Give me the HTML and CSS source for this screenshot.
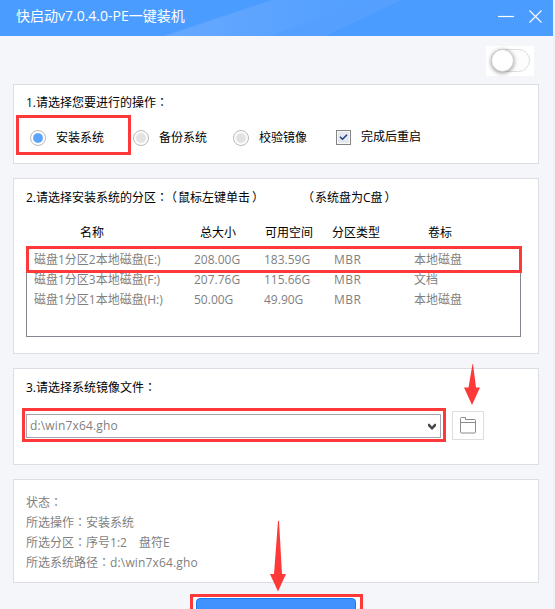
FILE: index.html
```html
<!DOCTYPE html>
<html lang="zh-CN">
<head>
<meta charset="utf-8">
<title>快启动v7.0.4.0-PE一键装机</title>
<link rel="stylesheet" href="styles.css">
</head>
<body>
<div class="window">
  <header class="titlebar">
    <svg class="sheen" width="553" height="36" viewBox="0 0 553 36">
      <defs>
        <linearGradient id="band" x1="0" x2="1"><stop offset="0" stop-color="#66a8ff"/><stop offset="1" stop-color="#4f9eff"/></linearGradient>
      </defs>
      <path d="M164 36L272 0H400L303 36Z" fill="url(#band)"/>
      <path d="M268 36L376 0H402L325 36Z" fill="#559fff"/>
    </svg>
    <h1 class="title">快启动v7.0.4.0-PE一键装机</h1>
    <svg class="controls" width="46" height="16" viewBox="0 0 46 16" fill="none" stroke="#fff">
      <path d="M0 8.5H16" stroke-width="1.2"/><path d="M31.5 2.5L43.5 14.5M43.5 2.5L31.5 14.5" stroke-width="1.1"/>
    </svg>
  </header>
  <div class="toolbar"><div class="toggle"><div class="track"><div class="knob"></div></div></div></div>

  <section class="panel actions">
    <h2 class="heading">1.请选择您要进行的操作<span class="cp" lang="zh-TW">：</span></h2>
    <div class="options">
      <label class="option"><i class="radio on"></i>安装系统</label>
      <label class="option"><i class="radio"></i>备份系统</label>
      <label class="option"><i class="radio"></i>校验镜像</label>
      <label class="option restart"><i class="check"><svg width="9" height="7" viewBox="0 0 9 7"><path d="M1 2.8L3.5 5.3L8 .8" fill="none" stroke="#203c8c" stroke-width="1.5"/></svg></i>完成后重启</label>
    </div>
    <div class="mark mark-action"></div>
  </section>

  <section class="panel partitions">
    <h2 class="heading"><span class="part-title">2.请选择安装系统的分区<span class="cp tight" lang="zh-TW">：</span><span class="open">（</span>鼠标左键单击<span class="close">）</span></span><span><span class="open">（</span>系统盘为C盘<span class="close">）</span></span></h2>
    <div class="row thead"><span>名称</span><span>总大小</span><span>可用空间</span><span>分区类型</span><span>卷标</span></div>
    <div class="list">
      <div class="row"><span>磁盘1分区2本地磁盘(E:)</span><span>208.00G</span><span>183.59G</span><span class="mbr">MBR</span><span>本地磁盘</span></div>
      <div class="row"><span>磁盘1分区3本地磁盘(F:)</span><span>207.76G</span><span>115.66G</span><span class="mbr">MBR</span><span>文档</span></div>
      <div class="row"><span>磁盘1分区1本地磁盘(H:)</span><span>50.00G</span><span>49.90G</span><span class="mbr">MBR</span><span>本地磁盘</span></div>
    </div>
    <div class="mark mark-row"></div>
  </section>

  <section class="panel image">
    <h2 class="heading">3.请选择系统镜像文件<span class="cp" lang="zh-TW">：</span></h2>
    <div class="picker">
      <div class="select"><span class="path">d:\win7x64.gho</span><svg width="8" height="7" viewBox="0 0 8 7"><path d="M0 .8V3L4 7L8 3V.8H6.6L4 3.6L1.4 .8Z" fill="#454545"/></svg></div>
      <div class="browse"><svg width="16" height="17" viewBox="0 0 16 17" fill="none" stroke="#8b8b8b"><path d="M.5 15V1.5Q.5 .5 1.5 .5H5.5V2.5H14.5Q15.5 2.5 15.5 3.5V15Q15.5 16 14.5 16H1.5Q.5 16 .5 15ZM.5 5.5H15.5"/></svg></div>
    </div>
    <div class="mark mark-path"></div>
    <svg class="arrow arrow-browse" width="16" height="41" viewBox="0 0 16 41"><path d="M8.5 0H9L12 23.5H16L8 41L0 23.5H4.5Z" fill="#fd3939"/></svg>
  </section>

  <section class="panel status">
    <p>状态<span class="cp" lang="zh-TW">：</span></p>
    <p>所选操作<span class="cp" lang="zh-TW">：</span>安装系统</p>
    <p>所选分区<span class="cp" lang="zh-TW">：</span>序号1:2<span class="drive">盘符E</span></p>
    <p>所选系统路径<span class="cp" lang="zh-TW">：</span><span class="path">d:\win7x64.gho</span></p>
    <svg class="arrow arrow-start" width="16" height="71" viewBox="0 0 16 71"><path d="M8 0H9L12 53H16L8 70.5L0 53H4Z" fill="#fd3939"/></svg>
  </section>

  <footer class="footer"><div class="start-mark"><div class="start"></div></div></footer>
</div>
</body>
</html>
```
FILE: styles.css
```css
* { box-sizing: border-box; }
html, body { margin: 0; height: 609px; overflow: hidden; background: #edf2fa; }
body { font: 12px/20px "Open Sans", "Noto Sans CJK SC", sans-serif; color: #000; text-spacing-trim: space-all; }
h1, h2, p { margin: 0; font-weight: 400; }
svg { display: block; }
.window { width: 553px; height: 609px; overflow: hidden; background: #f5f6f9; white-space: nowrap; }
.cp { font-family: "Noto Sans CJK TC", sans-serif; line-height: 1; }
.cp.tight { letter-spacing: -3px; }
.open { margin-right: 1px; }
.close { margin-left: 2px; }

.titlebar { position: relative; display: flex; justify-content: space-between; height: 36px; padding: 0 10px 0 16px; background: #4b9cff; }
.sheen { position: absolute; left: 0; top: 0; }
.title { position: relative; color: #fff; font-size: 14px; line-height: 32px; }
.controls { position: relative; margin-top: 8px; margin-right: -1px; }

.toolbar { display: flex; justify-content: flex-end; height: 48px; padding: 10px 19px 0 0; }
.toggle { width: 48px; height: 30px; padding: 3px 4px 0 5px; background: #fff; }
.track { width: 39px; height: 23px; border: 1px solid #ddd; border-radius: 12px; background: #fdfdfd; }
.knob { width: 23px; height: 23px; margin: -1px; border-radius: 50%; border: 1px solid #ccc; background: #fff; box-shadow: 0 1px 4px rgba(0,0,0,.4); }

.panel { position: relative; width: 526px; margin: 0 0 14px 13px; padding: 0 12px; border: 1px solid #dbdfe5; background: #fff; }
.heading { height: 20px; font-size: 12px; line-height: 20px; }
.mark { position: absolute; border: 3px solid #fd3939; }

.actions { height: 80px; padding-top: 8px; }
.options { display: flex; height: 20px; margin-top: 14px; padding-left: 4px; }
.option { display: flex; align-items: center; width: 100px; }
.option:first-child { width: 103px; }
.option:nth-child(3) { width: 102px; }
.option:not(.restart) { padding-top: 1px; height: 21px; }
.radio { width: 16px; height: 16px; margin-right: 10px; border: 1px solid #b9b9b9; border-radius: 50%; background: radial-gradient(circle, #e2e2e2 0 4px, #eee 5px, #fff 6px); }
.radio.on { background: radial-gradient(circle at 50% 50%, #5aa5fa 0 4.3px, #fff 5.5px); }
.option.restart { width: auto; padding-left: 1px; }
.check { display: flex; align-items: center; justify-content: center; width: 15px; height: 15px; margin-right: 10px; border: 1px solid #858585; background: #e5e8ed; box-shadow: inset 0 0 0 1px #f8f8f8; }
.mark-action { left: 2px; top: 30px; width: 115px; height: 40px; }

.partitions { height: 176px; padding-top: 9px; }
.partitions .heading { display: flex; }
.part-title { width: 276px; }
.row { display: grid; grid-template-columns: 160px 70px 70px 80px 1fr; height: 20px; }
.thead { grid-template-columns: 120px 65px 67px 96px 1fr; margin-top: 15px; padding-left: 54px; }
.list { width: 495px; height: 90px; margin-top: 4px; padding: 2px 0 0 7px; border: 1px solid #828790; color: #7f7f7f; }
.mbr { letter-spacing: .5px; }
.mark-row { left: 12px; top: 67px; width: 496px; height: 27px; }

.image { height: 97px; padding-top: 9px; }
.picker { display: flex; align-items: flex-start; margin-top: 13px; }
.select { display: flex; align-items: center; justify-content: space-between; width: 415px; height: 24px; margin: 3px 11px 0 0; padding: 0 4px 0 3px; border: 1px solid #a6a6b0; color: #7f7f7f; }
.path { font-size: 12px; letter-spacing: .15px; }
.browse { display: flex; align-items: center; justify-content: center; width: 32px; height: 29px; border: 1px solid #dedede; }
.mark-path { left: 8px; top: 39px; width: 424px; height: 34px; }
.arrow { position: absolute; }
.arrow-browse { left: 450px; top: -5px; }

.status { height: 104px; margin-bottom: 11px; padding-top: 13px; color: #7f7f7f; }
.status p { height: 20px; }
.drive { margin-left: 12px; }
.arrow-start { left: 256px; top: 41px; }

.footer { display: flex; padding-left: 190px; }
.start-mark { width: 173px; height: 42px; padding: 1px 4px 0 3px; border: 3px solid #fd3939; background: #fff; }
.start { width: 160px; height: 34px; border: 1px solid #167cf3; border-radius: 4px; background: #4093ff; }
```
